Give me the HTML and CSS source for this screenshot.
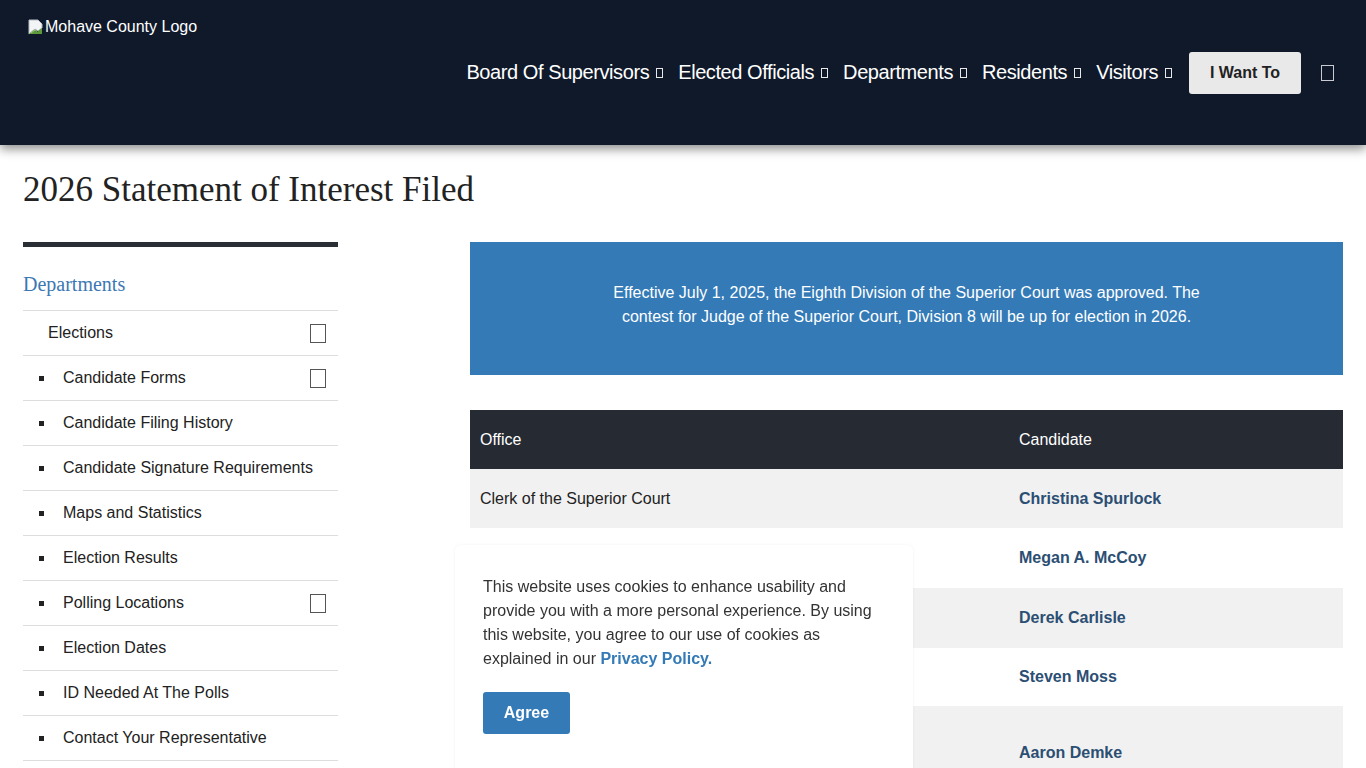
FILE: index.html
```html
<!DOCTYPE html>
<html lang="en">
<head>
<meta charset="utf-8">
<title>2026 Statement of Interest Filed</title>
<link rel="stylesheet" href="styles.css">
</head>
<body>
<header class="site-header">
  <div class="logo">
    <svg class="broken" width="16" height="16" viewBox="0 0 16 16">
      <path d="M1 1h9l4 4v4l-4 3-3-2-6 5z" fill="#f2f4f6" stroke="#b9bfc6" stroke-width="1"/>
      <path d="M1 15l5-4 3 2 5-4v6z" fill="#5c9a3a"/>
      <path d="M3 14l4-3 2 1.5" fill="none" stroke="#9ccc6c" stroke-width="1"/>
    </svg>
    <span>Mohave County Logo</span>
  </div>
  <nav class="main-nav">
    <a class="nav-item">Board Of Supervisors<span class="tofu"></span></a>
    <a class="nav-item">Elected Officials<span class="tofu"></span></a>
    <a class="nav-item">Departments<span class="tofu"></span></a>
    <a class="nav-item">Residents<span class="tofu"></span></a>
    <a class="nav-item">Visitors<span class="tofu"></span></a>
    <a class="want-btn">I Want To</a>
    <span class="menu-tofu"></span>
  </nav>
</header>

<div class="page">
  <h1 class="page-title">2026 Statement of Interest Filed</h1>
  <div class="layout">
    <aside class="sidebar">
      <div class="side-head">Departments</div>
      <ul class="side-list">
        <li class="top">Elections<span class="box"></span></li>
        <li><i class="bullet"></i>Candidate Forms<span class="box"></span></li>
        <li><i class="bullet"></i>Candidate Filing History</li>
        <li><i class="bullet"></i>Candidate Signature Requirements</li>
        <li><i class="bullet"></i>Maps and Statistics</li>
        <li><i class="bullet"></i>Election Results</li>
        <li><i class="bullet"></i>Polling Locations<span class="box"></span></li>
        <li><i class="bullet"></i>Election Dates</li>
        <li><i class="bullet"></i>ID Needed At The Polls</li>
        <li><i class="bullet"></i>Contact Your Representative</li>
        <li><i class="bullet"></i>Voter Registration</li>
      </ul>
    </aside>
    <main class="content">
      <div class="notice">
        <p>Effective July 1, 2025, the Eighth Division of the Superior Court was approved. The contest for Judge of the Superior Court, Division 8 will be up for election in 2026.</p>
      </div>
      <table class="filings">
        <thead>
          <tr><th class="c-office">Office</th><th>Candidate</th></tr>
        </thead>
        <tbody>
          <tr><td>Clerk of the Superior Court</td><td><a>Christina Spurlock</a></td></tr>
          <tr><td>County Attorney</td><td><a>Megan A. McCoy</a></td></tr>
          <tr><td>Judge, Division 8</td><td><a>Derek Carlisle</a></td></tr>
          <tr><td>Judge, Division 8</td><td><a>Steven Moss</a></td></tr>
          <tr class="tall"><td>Justice of the Peace</td><td><a>Aaron Demke</a></td></tr>
        </tbody>
      </table>
    </main>
  </div>
</div>

<div class="cookie">
  <p>This website uses cookies to enhance usability and provide you with a more personal experience. By using this website, you agree to our use of cookies as explained in our <a>Privacy Policy.</a></p>
  <button class="agree">Agree</button>
</div>
</body>
</html>
```

FILE: styles.css
```css
* { box-sizing: border-box; }
html, body { margin: 0; padding: 0; }
body {
  font-family: "Liberation Sans", Arial, sans-serif;
  font-size: 16px;
  color: #222;
  background: #fff;
  overflow: hidden;
}
a { text-decoration: none; color: inherit; }

.site-header {
  height: 145px;
  background: #0f192a;
  box-shadow: 0 4px 10px rgba(0,0,0,0.45);
  padding: 16px 33px 0 28px;
  position: relative;
  z-index: 2;
}
.logo {
  display: flex;
  align-items: center;
  height: 22px;
  color: #fff;
  font-size: 16px;
}
.logo .broken { display: block; margin-right: 1px; }
.main-nav {
  display: flex;
  justify-content: flex-end;
  align-items: center;
  margin-top: 14px;
  height: 42px;
}
.nav-item {
  color: #fff;
  font-size: 20px;
  display: flex;
  align-items: center;
  margin-left: 15px;
  letter-spacing: -0.42px;
  position: relative;
  top: -1px;
}
.tofu {
  display: inline-block;
  width: 7px;
  height: 10px;
  border: 1px solid #e8e8e8;
  margin-left: 7px;
  margin-top: 2px;
}
.want-btn {
  margin-left: 17px;
  background: #e9e9ea;
  color: #222;
  font-weight: bold;
  font-size: 16px;
  height: 42px;
  width: 112px;
  display: flex;
  align-items: center;
  justify-content: center;
  border-radius: 3px;
}
.menu-tofu {
  display: inline-block;
  width: 13px;
  height: 16px;
  border: 1.5px solid #c8ccd2;
  margin-left: 20px;
  margin-right: -1px;
}

.page { padding: 0 23px; }
.page-title {
  font-family: "Liberation Serif", "Times New Roman", serif;
  font-weight: normal;
  font-size: 35px;
  line-height: 40px;
  margin: 25px 0 0 0;
  color: #222;
}
.layout {
  display: grid;
  grid-template-columns: 315px 1fr;
  column-gap: 132px;
  margin-top: 32px;
}
.sidebar { border-top: 5px solid #2a2e35; }
.side-head {
  font-family: "Liberation Serif", "Times New Roman", serif;
  font-size: 20px;
  line-height: 24px;
  color: #3b78b3;
  padding: 25px 0 14px;
}
.side-list { list-style: none; margin: 0; padding: 0; }
.side-list li {
  height: 45px;
  border-top: 1px solid #ddd;
  display: flex;
  align-items: center;
  padding-left: 16px;
  font-size: 16px;
  color: #222;
}
.side-list li.top { padding-left: 25px; }
.bullet {
  display: inline-block;
  width: 5px;
  height: 5px;
  background: #222;
  margin-right: 19px;
}
.box {
  margin-left: auto;
  margin-right: 12px;
  width: 16px;
  height: 19px;
  border: 1px solid #555;
}

.notice {
  background: #337ab7;
  color: #fff;
  height: 133px;
  padding-top: 39px;
}
.notice p {
  margin: 0 auto;
  max-width: 600px;
  text-align: center;
  line-height: 24px;
  font-size: 16px;
}
.filings {
  width: 100%;
  border-collapse: collapse;
  margin-top: 35px;
}
.filings th, .filings td {
  text-align: left;
  font-weight: normal;
  padding: 0 10px;
  height: 59px;
  vertical-align: middle;
  font-size: 16px;
}
.filings th { background: #262a33; color: #fff; }
.filings th.c-office { width: 539px; }
.filings tbody tr:nth-child(odd) td { background: #f1f1f1; }
.filings tbody tr:nth-child(2) td { height: 60px; }
.filings tbody tr:nth-child(3) td { height: 60px; }
.filings tbody tr:nth-child(4) td { height: 58px; }
.filings tr.tall td { height: 94px; }
.filings td a { color: #2b4e73; font-weight: bold; }

.cookie {
  position: fixed;
  left: 455px;
  top: 545px;
  width: 458px;
  height: 240px;
  background: #fff;
  border-radius: 6px;
  box-shadow: 0 0 3px rgba(0,0,0,0.06);
  padding: 30px 28px;
  z-index: 5;
}
.cookie p {
  margin: 0;
  font-size: 16px;
  line-height: 24px;
  color: #333;
}
.cookie p a { color: #337ab7; font-weight: bold; }
.agree {
  display: block;
  margin-top: 21px;
  background: #337ab7;
  color: #fff;
  border: 0;
  border-radius: 3px;
  width: 87px;
  height: 42px;
  font-family: "Liberation Sans", Arial, sans-serif;
  font-size: 16px;
  font-weight: bold;
  padding: 0;
}
```
